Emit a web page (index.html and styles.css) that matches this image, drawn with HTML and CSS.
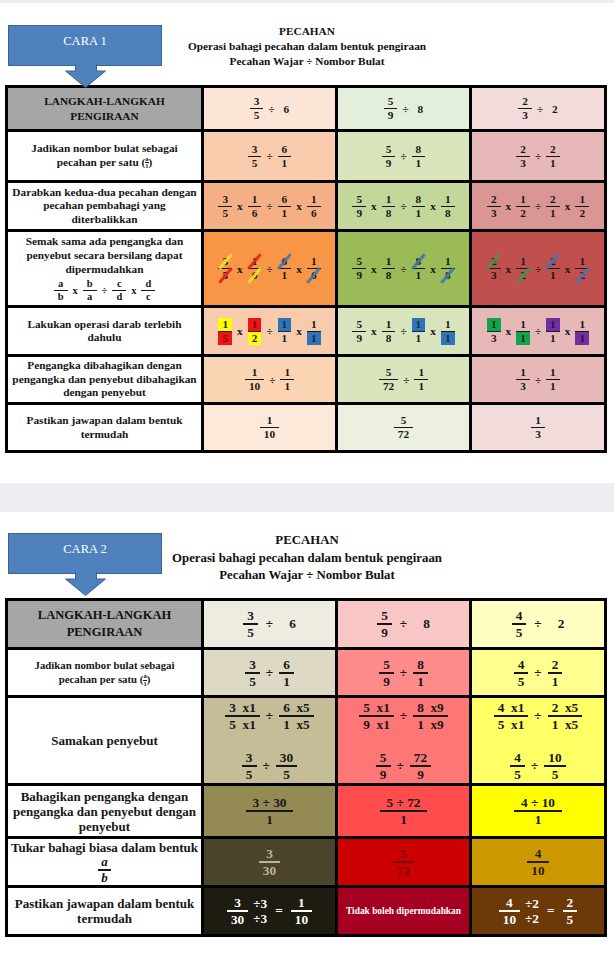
FILE: index.html
```html
<!DOCTYPE html>
<html>
<head>
<meta charset="utf-8">
<title>Pecahan</title>
<link rel="stylesheet" href="styles.css">
</head>
<body>
<div class="strip"></div>

<section class="sec s1">
  <header class="head">
    <div class="cara">
      <div class="cara-box">CARA 1</div>
      <svg class="arrow" width="154" height="23" viewBox="0 0 154 23"><path d="M67.5 -1 V6 H57.5 L77.5 22.5 L97.5 6 H88.5 V-1" fill="#4f81bd" stroke="#3a6392" stroke-width="1"/></svg>
    </div>
    <div class="title">
      <div>PECAHAN</div>
      <div>Operasi bahagi pecahan dalam bentuk pengiraan</div>
      <div>Pecahan Wajar ÷ Nombor Bulat</div>
    </div>
  </header>

  <div class="tbl t1">
    <!-- row 1 -->
    <div class="c hd">LANGKAH-LANGKAH<br>PENGIRAAN</div>
    <div class="c o1"><div class="ex"><span class="fr"><span>3</span><span>5</span></span><span>÷</span><span class="wn">6</span></div></div>
    <div class="c g1"><div class="ex"><span class="fr"><span>5</span><span>9</span></span><span>÷</span><span class="wn">8</span></div></div>
    <div class="c r1"><div class="ex"><span class="fr"><span>2</span><span>3</span></span><span>÷</span><span class="wn">2</span></div></div>

    <!-- row 2 -->
    <div class="c lbl">Jadikan nombor bulat sebagai<br><span>pecahan per satu (<span class="mini"><span>a</span><span>1</span></span>)</span></div>
    <div class="c o2"><div class="ex"><span class="fr"><span>3</span><span>5</span></span><span>÷</span><span class="fr"><span>6</span><span>1</span></span></div></div>
    <div class="c g2"><div class="ex"><span class="fr"><span>5</span><span>9</span></span><span>÷</span><span class="fr"><span>8</span><span>1</span></span></div></div>
    <div class="c r2"><div class="ex"><span class="fr"><span>2</span><span>3</span></span><span>÷</span><span class="fr"><span>2</span><span>1</span></span></div></div>

    <!-- row 3 -->
    <div class="c lbl">Darabkan kedua-dua pecahan dengan<br>pecahan pembahagi yang<br>diterbalikkan</div>
    <div class="c o3"><div class="ex"><span class="fr"><span>3</span><span>5</span></span><span>x</span><span class="fr"><span>1</span><span>6</span></span><span>÷</span><span class="fr"><span>6</span><span>1</span></span><span>x</span><span class="fr"><span>1</span><span>6</span></span></div></div>
    <div class="c g3"><div class="ex"><span class="fr"><span>5</span><span>9</span></span><span>x</span><span class="fr"><span>1</span><span>8</span></span><span>÷</span><span class="fr"><span>8</span><span>1</span></span><span>x</span><span class="fr"><span>1</span><span>8</span></span></div></div>
    <div class="c r3"><div class="ex"><span class="fr"><span>2</span><span>3</span></span><span>x</span><span class="fr"><span>1</span><span>2</span></span><span>÷</span><span class="fr"><span>2</span><span>1</span></span><span>x</span><span class="fr"><span>1</span><span>2</span></span></div></div>

    <!-- row 4 -->
    <div class="c lbl tight">
      <div>Semak sama ada pengangka dan<br>penyebut secara bersilang dapat<br>dipermudahkan</div>
      <div class="ex formula"><span class="fr"><span>a</span><span>b</span></span><span>x</span><span class="fr"><span>b</span><span>a</span></span><span>÷</span><span class="fr"><span>c</span><span>d</span></span><span>x</span><span class="fr"><span>d</span><span>c</span></span></div>
    </div>
    <div class="c o4"><div class="ex"><span class="fr"><span class="sl yl">3</span><span class="sl rd">5</span></span><span>x</span><span class="fr"><span class="sl rd">1</span><span class="sl yl">6</span></span><span>÷</span><span class="fr"><span class="sl bl">6</span><span>1</span></span><span>x</span><span class="fr"><span>1</span><span class="sl bl">6</span></span></div></div>
    <div class="c g4"><div class="ex"><span class="fr"><span>5</span><span>9</span></span><span>x</span><span class="fr"><span>1</span><span>8</span></span><span>÷</span><span class="fr"><span class="sl bl">8</span><span>1</span></span><span>x</span><span class="fr"><span>1</span><span class="sl bl">8</span></span></div></div>
    <div class="c r4"><div class="ex"><span class="fr"><span class="sl gn">2</span><span>3</span></span><span>x</span><span class="fr"><span>1</span><span class="sl gn">2</span></span><span>÷</span><span class="fr"><span class="sl bl">2</span><span>1</span></span><span>x</span><span class="fr"><span>1</span><span class="sl bl">2</span></span></div></div>

    <!-- row 5 -->
    <div class="c lbl">Lakukan operasi darab terlebih<br>dahulu</div>
    <div class="c o5"><div class="ex"><span class="fr"><span class="bx yl">1</span><span class="bx rd">5</span></span><span>x</span><span class="fr"><span class="bx rd">1</span><span class="bx yl">2</span></span><span>÷</span><span class="fr"><span class="bx bl">1</span><span>1</span></span><span>x</span><span class="fr"><span>1</span><span class="bx bl">1</span></span></div></div>
    <div class="c g5"><div class="ex"><span class="fr"><span>5</span><span>9</span></span><span>x</span><span class="fr"><span>1</span><span>8</span></span><span>÷</span><span class="fr"><span class="bx bl">1</span><span>1</span></span><span>x</span><span class="fr"><span>1</span><span class="bx bl">1</span></span></div></div>
    <div class="c r5"><div class="ex"><span class="fr"><span class="bx gn">1</span><span>3</span></span><span>x</span><span class="fr"><span>1</span><span class="bx gn">1</span></span><span>÷</span><span class="fr"><span class="bx pu">1</span><span>1</span></span><span>x</span><span class="fr"><span>1</span><span class="bx pu">1</span></span></div></div>

    <!-- row 6 -->
    <div class="c lbl">Pengangka dibahagikan dengan<br>pengangka dan penyebut dibahagikan<br>dengan penyebut</div>
    <div class="c o6"><div class="ex"><span class="fr"><span>1</span><span>10</span></span><span>÷</span><span class="fr"><span>1</span><span>1</span></span></div></div>
    <div class="c g6"><div class="ex"><span class="fr"><span>5</span><span>72</span></span><span>÷</span><span class="fr"><span>1</span><span>1</span></span></div></div>
    <div class="c r6"><div class="ex"><span class="fr"><span>1</span><span>3</span></span><span>÷</span><span class="fr"><span>1</span><span>1</span></span></div></div>

    <!-- row 7 -->
    <div class="c lbl">Pastikan jawapan dalam bentuk<br>termudah</div>
    <div class="c o7"><div class="ex"><span class="fr"><span>1</span><span>10</span></span></div></div>
    <div class="c g7"><div class="ex"><span class="fr"><span>5</span><span>72</span></span></div></div>
    <div class="c r7"><div class="ex"><span class="fr"><span>1</span><span>3</span></span></div></div>
  </div>
</section>

<div class="band"></div>

<section class="sec s2">
  <header class="head">
    <div class="cara">
      <div class="cara-box">CARA 2</div>
      <svg class="arrow" width="154" height="23" viewBox="0 0 154 23"><path d="M67.5 -1 V6 H57.5 L77.5 22.5 L97.5 6 H88.5 V-1" fill="#4f81bd" stroke="#3a6392" stroke-width="1"/></svg>
    </div>
    <div class="title">
      <div>PECAHAN</div>
      <div>Operasi bahagi pecahan dalam bentuk pengiraan</div>
      <div>Pecahan Wajar ÷ Nombor Bulat</div>
    </div>
  </header>

  <div class="tbl t2">
    <!-- row 1 -->
    <div class="c hd">LANGKAH-LANGKAH<br>PENGIRAAN</div>
    <div class="c b1"><div class="ex"><span class="fr"><span>3</span><span>5</span></span><span>÷</span><span class="wn">6</span></div></div>
    <div class="c p1"><div class="ex"><span class="fr"><span>5</span><span>9</span></span><span>÷</span><span class="wn">8</span></div></div>
    <div class="c y1"><div class="ex"><span class="fr"><span>4</span><span>5</span></span><span>÷</span><span class="wn">2</span></div></div>

    <!-- row 2 -->
    <div class="c lbl sm">Jadikan nombor bulat sebagai<br><span>pecahan per satu (<span class="mini"><span>a</span><span>1</span></span>)</span></div>
    <div class="c b2"><div class="ex"><span class="fr"><span>3</span><span>5</span></span><span>÷</span><span class="fr"><span>6</span><span>1</span></span></div></div>
    <div class="c p2"><div class="ex"><span class="fr"><span>5</span><span>9</span></span><span>÷</span><span class="fr"><span>8</span><span>1</span></span></div></div>
    <div class="c y2"><div class="ex"><span class="fr"><span>4</span><span>5</span></span><span>÷</span><span class="fr"><span>2</span><span>1</span></span></div></div>

    <!-- row 3 -->
    <div class="c lbl">Samakan penyebut</div>
    <div class="c b3 two">
      <div class="ex"><span class="fr"><span>3&nbsp;&nbsp;x1</span><span>5&nbsp;&nbsp;x1</span></span><span>÷</span><span class="fr"><span>6&nbsp;&nbsp;x5</span><span>1&nbsp;&nbsp;x5</span></span></div>
      <div class="ex"><span class="fr"><span>3</span><span>5</span></span><span>÷</span><span class="fr"><span>30</span><span>5</span></span></div>
    </div>
    <div class="c p3 two">
      <div class="ex"><span class="fr"><span>5&nbsp;&nbsp;x1</span><span>9&nbsp;&nbsp;x1</span></span><span>÷</span><span class="fr"><span>8&nbsp;&nbsp;x9</span><span>1&nbsp;&nbsp;x9</span></span></div>
      <div class="ex"><span class="fr"><span>5</span><span>9</span></span><span>÷</span><span class="fr"><span>72</span><span>9</span></span></div>
    </div>
    <div class="c y3 two">
      <div class="ex"><span class="fr"><span>4&nbsp;&nbsp;x1</span><span>5&nbsp;&nbsp;x1</span></span><span>÷</span><span class="fr"><span>2&nbsp;&nbsp;x5</span><span>1&nbsp;&nbsp;x5</span></span></div>
      <div class="ex"><span class="fr"><span>4</span><span>5</span></span><span>÷</span><span class="fr"><span>10</span><span>5</span></span></div>
    </div>

    <!-- row 4 -->
    <div class="c lbl">Bahagikan pengangka dengan<br>pengangka dan penyebut dengan<br>penyebut</div>
    <div class="c b4"><div class="ex"><span class="fr wide"><span>3 ÷ 30</span><span>1</span></span></div></div>
    <div class="c p4"><div class="ex"><span class="fr wide"><span>5 ÷ 72</span><span>1</span></span></div></div>
    <div class="c y4"><div class="ex"><span class="fr wide"><span>4 ÷ 10</span><span>1</span></span></div></div>

    <!-- row 5 -->
    <div class="c lbl">
      <div>Tukar bahagi biasa dalam bentuk</div>
      <span class="fr ital"><span>a</span><span>b</span></span>
    </div>
    <div class="c b5"><div class="ex"><span class="fr"><span>3</span><span>30</span></span></div></div>
    <div class="c p5"><div class="ex"><span class="fr"><span>5</span><span>72</span></span></div></div>
    <div class="c y5"><div class="ex"><span class="fr"><span>4</span><span>10</span></span></div></div>

    <!-- row 6 -->
    <div class="c lbl">Pastikan jawapan dalam bentuk<br>termudah</div>
    <div class="c b6"><div class="ex"><span class="fr"><span>3</span><span>30</span></span><span class="stk"><span>÷3</span><span>÷3</span></span><span class="eq">=</span><span class="fr"><span>1</span><span>10</span></span></div></div>
    <div class="c p6"><div class="note">Tidak boleh dipermudahkan</div></div>
    <div class="c y6"><div class="ex"><span class="fr"><span>4</span><span>10</span></span><span class="stk"><span>÷2</span><span>÷2</span></span><span class="eq">=</span><span class="fr"><span>2</span><span>5</span></span></div></div>
  </div>
</section>
</body>
</html>
```

FILE: styles.css
```css
* { box-sizing: border-box; }

body {
  margin: 0;
  background: #ffffff;
  font-family: "Liberation Serif", "Times New Roman", serif;
  font-weight: bold;
  color: #161616;
}

.strip { height: 3px; background: #eeeeee; }
.band { height: 29px; margin-top: 30px; background: #eceef1; }

/* ---------- header ---------- */
.head {
  display: grid;
  grid-template-columns: 162px 1fr 162px;
}
.s1 .head { height: 82px; }
.s2 .head { height: 86px; }

.cara {
  position: relative;
  z-index: 2;
  padding-left: 8px;
}
.s1 .cara { padding-top: 22px; }
.s2 .cara { padding-top: 21px; }

.cara-box {
  width: 154px;
  height: 41px;
  background: #4f81bd;
  border: 1.5px solid #3a6392;
  color: #ffffff;
  font-weight: normal;
  font-size: 12.5px;
  line-height: 15px;
  padding-top: 8px;
  text-align: center;
}
.arrow { display: block; margin-top: -1px; overflow: visible; }

.title { grid-column: 2; text-align: center; color: #111; }
.s1 .title { font-size: 11.3px; line-height: 15px; padding-top: 21px; }
.s2 .title { font-size: 12.8px; line-height: 17.5px; padding-top: 20px; }

/* ---------- tables ---------- */
.tbl {
  display: grid;
  grid-template-columns: 193px 131px 131px 132px;
  gap: 3px;
  padding: 3px;
  width: 602px;
  margin-left: 5px;
  background: #000000;
}
.t1 { grid-template-rows: 41px 48px 46px 73px 46px 45px 45px; }
.t2 { grid-template-rows: 46px 45px 85px 50px 46px 46px; }

.c {
  display: flex;
  flex-direction: column;
  align-items: center;
  justify-content: center;
  text-align: center;
  white-space: nowrap;
}

.hd { background: #a6a6a6; color: #111; }
.t1 .hd { font-size: 11.3px; line-height: 15px; }
.t2 .hd { font-size: 12.5px; line-height: 17px; }

.lbl { background: #ffffff; }
.t1 .lbl { font-size: 11.3px; line-height: 13.5px; }
.t1 .lbl.tight { line-height: 14px; }
.t2 .lbl { font-size: 13px; line-height: 15px; }
.t2 .lbl.sm { font-size: 10.8px; line-height: 14px; }

/* tiny a/1 fraction */
.mini {
  display: inline-flex;
  flex-direction: column;
  vertical-align: middle;
  font-size: 6.5px;
  line-height: 6.5px;
  text-align: center;
}
.mini > span:first-child { border-bottom: 0.8px solid currentColor; }

/* ---------- expressions ---------- */
.ex {
  display: flex;
  align-items: center;
  justify-content: center;
  white-space: pre;
}
.t1 .ex { font-size: 11.3px; gap: 5px; }
.t2 .ex { font-size: 13.3px; gap: 6px; }

.fr {
  display: inline-flex;
  flex-direction: column;
  align-items: stretch;
  text-align: center;
}
.t1 .fr { line-height: 13px; }
.t2 .fr { line-height: 15px; }
.fr > span { padding: 0 4px; }
.fr > span:first-child { border-bottom: 1.5px solid currentColor; }
.t2 .fr > span:first-child { border-bottom-width: 2px; }
.t2 .fr.wide > span { padding: 0 7px; }

.wn { margin-left: 4px; }
.t2 .wn { margin-left: 8px; }
.t2 .b1 .ex, .t2 .p1 .ex, .t2 .y1 .ex { gap: 8px; }

.t1 .formula { font-size: 10.5px; gap: 5px; margin-top: 2px; }
.t1 .formula .fr { line-height: 12px; }

.ital { font-style: italic; font-size: 13px; }
.t2 .fr.ital { line-height: 14px; }
.fr.ital > span { padding: 0 3px; }

.stk {
  display: inline-flex;
  flex-direction: column;
  line-height: 15px;
  margin-left: -1px;
}
.eq { margin: 0 2px; }
.t2 .b6 .fr > span:first-child,
.t2 .y6 .fr > span:first-child { border-bottom-width: 2.5px; }

.note { font-size: 9.4px; color: #ffffff; }

.two { justify-content: space-between; padding: 2px 0 1px; }

/* slashed digits */
.sl { position: relative; }
.sl::after {
  content: "";
  position: absolute;
  left: 50%;
  top: 50%;
  width: 19px;
  height: 3px;
  margin: -1.5px 0 0 -9.5px;
  background: var(--sc);
  opacity: 0.9;
  transform: rotate(-50deg);
}
.sl.yl { --sc: #f3e41f; }
.sl.rd { --sc: #e3231b; }
.sl.bl { --sc: #3f78b5; }
.sl.gn { --sc: #3c9a4b; }

/* boxed digits */
.bx.yl { background: #ffff00; color: #222; }
.bx.rd { background: #e8161a; color: #7a0000; }
.bx.bl { background: #2f75b5; color: #0e2a47; }
.bx.gn { background: #10a54a; color: #053016; }
.bx.pu { background: #7030a0; color: #2a0f40; }

/* ---------- table 1 colours ---------- */
.o1 { background: #fce4d6; }
.o2 { background: #f8cbad; }
.o3 { background: #f4b084; }
.o4 { background: #f79646; }
.o5 { background: #f8cbad; }
.o6 { background: #fbd4b4; }
.o7 { background: #fde9d9; }

.g1 { background: #e4efdb; }
.g2 { background: #d8e4bc; }
.g3 { background: #c4d79b; }
.g4 { background: #9bbb59; }
.g5 { background: #d8e4bc; }
.g6 { background: #d8e4bc; }
.g7 { background: #ebf1de; }

.r1 { background: #f2dcdb; }
.r2 { background: #e6b9b8; }
.r3 { background: #da9694; }
.r4 { background: #c0504d; }
.r5 { background: #e6b9b8; }
.r6 { background: #e6b9b8; }
.r7 { background: #f2dcdb; }

/* ---------- table 2 colours ---------- */
.b1 { background: #eeece1; }
.b2 { background: #ddd9c4; }
.b3 { background: #c4bd97; }
.b4 { background: #948a54; }
.b5 { background: #4a452a; color: #bdb58f; }
.b6 { background: #1e1c11; color: #ffffff; }

.p1 { background: #f9c6c6; }
.p2 { background: #ff8b8b; }
.p3 { background: #ff7676; }
.p4 { background: #ff4d4d; }
.p5 { background: #cc0000; color: #7d0000; }
.p6 { background: #a50021; }

.y1 { background: #ffffc1; }
.y2 { background: #ffff8f; }
.y3 { background: #ffff66; }
.y4 { background: #ffff00; }
.y5 { background: #cc9a00; color: #2a1c00; }
.y6 { background: #6b3a08; color: #ffffff; }
```
